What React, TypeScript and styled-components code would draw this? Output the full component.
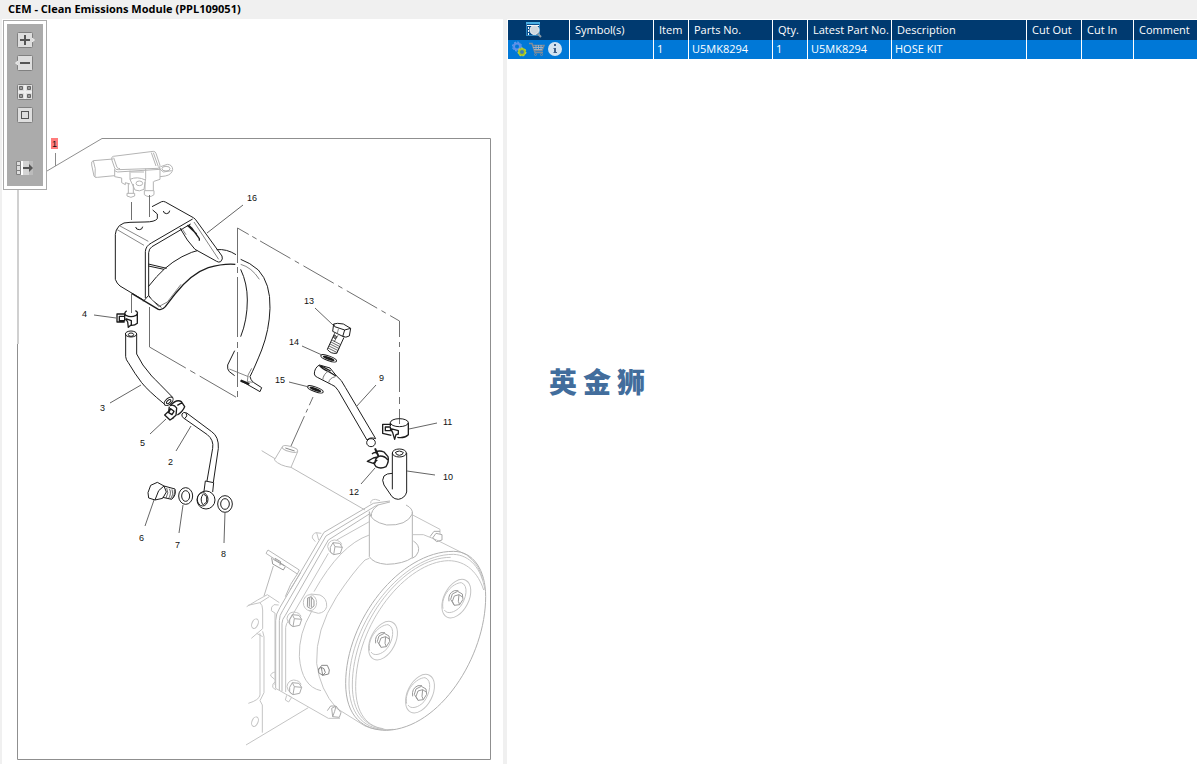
import React from "react";
import styled, { createGlobalStyle } from "styled-components";

const GlobalStyle = createGlobalStyle`
  * { box-sizing: border-box; }
  body {
    margin: 0;
    background: #fff;
    color: #000;
    font-family: "Open Sans", "Noto Sans", sans-serif;
    font-size: 11px;
  }
`;

const Page = styled.div`
  display: flex;
  flex-direction: column;
  min-height: 100vh;
`;

const TitleBar = styled.header`
  height: 19px;
  padding-left: 8px;
  background: #f0f0f0;
`;

const Title = styled.h1`
  margin: 0;
  font-size: 11px;
  line-height: 18px;
  font-weight: 700;
  white-space: nowrap;
`;

const Workspace = styled.main`
  flex: 1;
  display: grid;
  grid-template-columns: minmax(0, 503fr) 5px minmax(0, 689fr);
`;

const DiagramPane = styled.section`
  position: relative;
  border-left: 2px solid #f0f0f0;
`;

const Splitter = styled.div`
  background: #f0f0f0;
  border-right: 1px solid #fff;
`;

const PartsPane = styled.section`
  display: flex;
  flex-direction: column;
  padding-top: 1px;
  overflow: hidden;
`;

const Toolbar = styled.div`
  position: absolute;
  top: 1px;
  left: 1px;
  display: flex;
  flex-direction: column;
  align-items: center;
  gap: 7px;
  width: 44px;
  height: 170px;
  padding: 8px 0 12px;
  border: 1px solid #aaa;
  background: #ababab;
  box-shadow: inset 0 0 0 3px #fff;
`;

const ToolButton = styled.button<{ $before?: number }>`
  width: 20px;
  height: 16px;
  margin: ${(p) => p.$before ?? 0}px 0 0;
  padding: 0;
  border: 0;
  background: none;
  svg { display: block; }
`;

const Drawing = styled.svg`
  display: block;
  width: 100%;
  height: auto;
  text {
    font-family: "Liberation Sans", sans-serif;
    font-size: 9px;
    fill: #111;
  }
`;

const PartsTable = styled.table`
  width: 100%;
  table-layout: fixed;
  border-collapse: separate;
  border-spacing: 0;
`;

const HeadCell = styled.th`
  height: 20px;
  padding: 0 0 0 5px;
  border-right: 1px solid #fff;
  background: #003a70;
  color: #fff;
  font-weight: 400;
  line-height: 16px;
  text-align: left;
  white-space: nowrap;
  &:last-child { border-right: 0; }
`;

const Cell = styled.td`
  height: 19px;
  padding: 0 0 2px 3px;
  border-right: 1px solid #fff;
  background: #0078d7;
  color: #fff;
  line-height: 16px;
  white-space: nowrap;
  &:last-child { border-right: 0; }
`;

const IconRow = styled.div<{ $indent: number }>`
  display: flex;
  align-items: center;
  gap: 2px;
  padding-left: ${(p) => p.$indent}px;
`;

const IconButton = styled.button`
  padding: 0;
  border: 0;
  background: none;
  svg { display: block; }
`;

const Brand = styled.div`
  display: flex;
  gap: 6px;
  margin: 304px 0 0 41px;
  color: #426d9c;
  font-family: "Noto Sans CJK SC", sans-serif;
  font-size: 28px;
  line-height: 36px;
  font-weight: 900;
`;

const columns = [
  { name: "Symbol(s)", width: 84, value: "" },
  { name: "Item", width: 35, value: "1" },
  { name: "Parts No.", width: 84, value: "U5MK8294" },
  { name: "Qty.", width: 35, value: "1" },
  { name: "Latest Part No.", width: 84, value: "U5MK8294" },
  { name: "Description", width: 135, value: "HOSE KIT" },
  { name: "Cut Out", width: 55, value: "" },
  { name: "Cut In", width: 52, value: "" },
  { name: "Comment", width: undefined, value: "" },
];

const callouts: [string, number, number, string][] = [
  ["16", 247, 201, "M243 205L207 233"],
  ["4", 82, 317, "M94 315L116 318"],
  ["3", 100, 411, "M110 403L141 385"],
  ["5", 140, 446, "M150 434L166 419"],
  ["2", 168, 465, "M176 451L191 426"],
  ["6", 139, 541, "M145 526L154 500"],
  ["7", 175, 548, "M179 533L183 505"],
  ["8", 221, 557, "M224 543L225 512"],
  ["13", 304, 304, "M315 308L333 325"],
  ["14", 289, 345, "M302 346L322 355"],
  ["15", 275, 383, "M289 382L309 387"],
  ["9", 379, 381, "M376 385L356 407"],
  ["11", 443, 425, "M437 423L409 429"],
  ["12", 349, 495, "M361 484L375 468"],
  ["10", 443, 480, "M435 475L407 471"],
];

const Plate = () => (
  <rect x="2.5" y="0.5" width="15" height="15" rx="1" fill="#dedede" stroke="#808080" />
);

const Bolt = ({ x, y }: { x: number; y: number }) => (
  <g transform={`translate(${x} ${y})`}>
    <path d="M-22 -2Q-20 -20 -2 -22Q18 -20 20 -8M-22 -2Q-20 12 -8 20" />
    <path d="M-14 0L-6 -14L14 -12L22 0L16 18L-4 22L-14 14ZM-6 -14L0 -2L-4 22M0 -2L22 0" stroke="#aaa" />
  </g>
);

const Pad = ({ x, y }: { x: number; y: number }) => (
  <g transform={`translate(${x} ${y})`}>
    <ellipse rx="37" ry="62" transform="rotate(27)" />
    <path d="M-40 30C-48 -10 -10 -48 15 -48C38 -40 30 0 12 24C-4 42 -28 48 -36 34" />
    <path stroke="#999" d="M-17 2L-12 -14L4 -22L18 -14L20 2L10 18L-6 20ZM-6 -8L8 -12L20 -4M-6 -8L-12 8L-6 20M8 -12L6 8L10 18M-22 8Q-26 -16 -6 -24L6 -24" />
  </g>
);

const Washer = ({ x, y }: { x: number; y: number }) => (
  <g transform={`translate(${x} ${y}) rotate(20)`}>
    <ellipse rx="25" ry="7" strokeWidth="3" />
    <ellipse rx="16" ry="2" strokeWidth="5" />
  </g>
);

const AssemblyDrawing = () => (
  <Drawing viewBox="2 19 501 745" role="img" aria-label="Clean Emissions Module exploded view">
    <g fill="none" strokeLinecap="butt" strokeLinejoin="round">
      <path d="M47 171L102 138.500H490.500V759.500H17.500V343" stroke="#8f8f8f" />
      <path d="M18 190V344" stroke="#d0d0d0" strokeWidth="2" />
      <path d="M55.500 153V166" stroke="#8a8a8a" />

      {/* pressure sensor */}
      <g transform="translate(80 140) scale(.33333)" stroke="#b4b4b4" strokeWidth="3">
        <path d="M100 57L40 62Q33 63 35 75L42 108Q44 114 52 112L104 107M40 62Q49 85 45 111" />
        <path d="M100 49L220 34Q226 34 228 40L240 76Q242 83 234 85L115 89Q107 90 104 84L95 58Q94 50 100 49Z" />
        <path d="M101 53L111 82Q114 86 120 86M214 38L228 78M220 38L235 80" />
        <path d="M104 86V110L125 114V128L136 134V128L150 132M240 83V118L222 124M104 92L112 96L240 88" />
        <path d="M145 130V160M160 132V160M141 160H164V168Q153 176 141 168ZM195 126V152M220 124V152M193 152H222V164Q208 176 193 164Z" />
        <path d="M150 92V118L165 150Q178 156 192 148L197 116V86M150 118Q172 108 196 120M152 96H192" />
        <ellipse cx="178" cy="130" rx="10" ry="7" />
        <path d="M242 80L262 73Q277 74 278 88Q276 104 256 108L240 110M236 84L250 96L275 92" />
        <ellipse cx="258" cy="86" rx="12" ry="7" />
      </g>

      {/* bracket and band */}
      <g transform="translate(80 140) scale(.33333)" stroke="#1c1c1c" strokeWidth="3">
        <path d="M216 200L245 185Q250 183 256 186L340 233Q346 236 352 246L426 348Q430 357 422 365Q416 368 410 364L345 328L322 300L300 264" />
        <path d="M218 210L232 222V236Q225 246 195 246L150 247Q130 246 118 257Q106 270 106 283V418Q110 430 120 438L190 480" />
        <path d="M167 261Q168 269 178 269Q187 269 188 260M250 213Q251 221 260 221Q269 220 269 212" />
        <path d="M196 474V335Q197 318 214 309L338 237" />
        <path d="M206 466V338Q207 326 216 320L332 252" />
        <path d="M326 256L335 264L358 296V302M322 256L350 282" strokeWidth="4" />
        <path d="M205 440L230 410Q275 360 335 337L352 332M205 372L260 385M205 378L252 388" />
        <path d="M410 329Q440 326 468 344" />
        <path d="M155 460L235 508Q246 512 256 500L285 462Q335 400 385 383Q430 370 466 373" strokeWidth="4" />
        <path d="M190 484L206 466L216 480L244 502" />
        <path d="M110 268L192 316M120 258L205 304M342 246L416 358M305 264L318 284M206 470L236 500L262 486L303 433" stroke="#888" />
      </g>
      <g transform="translate(200 220) scale(.33333)" stroke="#1c1c1c" strokeWidth="3">
        <path d="M122 118Q150 128 175 150Q212 190 210 265Q208 330 185 390Q165 440 150 470Q152 480 160 487L185 503L180 515L122 482" />
        <path d="M122 148Q142 190 142 240Q142 300 122 350M104 392L83 435Q81 448 88 455L104 467" />
        <path d="M122 482L148 492" strokeWidth="7" />
        <path d="M122 133Q155 142 178 178M88 447L145 470M155 445Q140 465 142 485L160 487" stroke="#888" />
      </g>

      {/* assembly axes */}
      <g stroke="#707070">
        <path d="M131.500 202V220M131.500 292V313M149.500 195V217" />
        <path d="M237.500 228V398" strokeDasharray="35 4 6 4 60 5 6 4" />
        <path d="M237.500 228L399.500 321" strokeDasharray="13 4 5 4 35 5 5 5 35 5 5 5 35 5 5 5" />
        <path d="M399.500 321V424" strokeDasharray="16 5 5 5 40 5 7 5 60 5" />
        <path d="M149.500 307V347M149.500 347L237.500 398" strokeDasharray="42 5 6 5" />
        <path d="M313 397L291 446" strokeDasharray="9 4 4 4 60 4" />
      </g>

      {/* clamp 4, hose 3, clamp 5, tube 2, bolt 6, washers 7 and 8 */}
      <g transform="translate(60 290) scale(.33333)" stroke="#1c1c1c" strokeWidth="3">
        <path d="M200 62Q190 70 198 76Q213 84 228 76Q238 68 226 62M194 70V94M232 70V100Q224 107 212 106M194 72H171V96H194M178 79H194V92H178ZM197 86L203 96L205 112L214 104V92L197 86" strokeWidth="4" />
        <ellipse cx="213" cy="132" rx="17" ry="9" />
        <ellipse cx="213" cy="134" rx="8" ry="5" />
        <path d="M197 132V200Q198 210 205 218Q225 252 245 278Q262 300 314 343M230 132V192Q245 225 275 258Q292 275 338 322" />
        <ellipse cx="326" cy="334" rx="16" ry="9" transform="rotate(-42 326 334)" />
        <ellipse cx="326" cy="335" rx="8" ry="4" transform="rotate(-42 326 335)" />
        <path d="M330 347Q350 326 364 335L374 350Q368 365 352 375M352 346L366 338M330 347Q342 342 350 354L348 376L338 384M328 350L326 364L314 375L330 390L342 382M332 356L342 364L336 374L326 368Z" strokeWidth="4" />
        <path d="M372 385Q363 380 366 372Q370 364 380 369L455 425Q477 440 475 475L460 577M372 385L442 434Q462 450 458 475L441 573M378 369Q385 378 374 386M436 573L461 578L458 606M436 573L432 604" />
        <ellipse cx="438" cy="630" rx="27" ry="27" />
        <ellipse cx="428" cy="628" rx="16" ry="20" />
        <path d="M430 612Q418 626 428 644M432 613L440 620V636L430 644" />
        <path d="M264 608L272 586L292 577L312 588L319 606L308 625L285 630L266 624ZM312 588L296 602L285 630M312 588L345 597Q350 615 335 628L308 622" />
        <path d="M320 594Q328 608 318 624M328 596Q336 610 325 627M336 598Q343 612 332 627M343 600Q346 612 338 624" strokeWidth="2" />
        <ellipse cx="377" cy="618" rx="21" ry="25" />
        <ellipse cx="377" cy="618" rx="12" ry="16" />
        <ellipse cx="495" cy="642" rx="22" ry="25" />
        <ellipse cx="495" cy="642" rx="13" ry="16" />
      </g>

      {/* bolt 13 and washer 14 */}
      <g transform="translate(200 220) scale(.33333)" stroke="#1c1c1c" strokeWidth="3">
        <path d="M401 312Q410 308 430 312L452 325L448 348Q438 355 426 348L398 334ZM401 312L404 320L434 330L452 325M434 330L428 350" />
        <path d="M416 324L412 340" stroke="#888" />
        <path d="M404 340L382 388Q392 402 410 400L432 352" />
        <circle cx="405" cy="351" r="4" />
        <path d="M396 360L422 374M393 366L420 380M390 372L418 386M387 378L415 392M384 384L412 398M414 346L402 366" strokeWidth="2" />
        <Washer x={386} y={415} />
      </g>

      {/* pipe 9, clamps 11 and 12, elbow 10 */}
      <g transform="translate(260 360) scale(.33333)" stroke="#1c1c1c" strokeWidth="3">
        <Washer x={166} y={88} />
        <path d="M178 15Q163 24 163 42Q165 50 172 52L215 74Q225 76 235 92L321 240M178 15L210 24L228 46Q246 60 256 82L347 236" />
        <path d="M178 16Q186 26 208 36L228 48M184 18L212 33" strokeWidth="4" />
        <path d="M188 60Q190 42 206 33M206 68Q208 54 226 50" stroke="#777" />
        <ellipse cx="333" cy="248" rx="13" ry="12" />
        <path d="M321 240Q330 230 347 236" />
        <ellipse cx="418" cy="188" rx="27" ry="12" />
        <path d="M391 188V198M445 188V224Q432 236 412 232M391 193H368V220L394 226M391 201H376V212H392ZM392 206L415 212V222L408 224L404 238L398 218Z" strokeWidth="4" />
        <path d="M347 276Q358 270 372 276L384 290Q388 304 378 320Q362 328 348 320L340 308M346 310Q342 296 360 288Q376 288 383 300M356 290L340 294L322 304L340 310L352 300M336 282Q344 274 352 280" strokeWidth="4" />
        <path d="M345 265L356 290" strokeWidth="6" />
        <ellipse cx="418" cy="279" rx="21" ry="12" />
        <path d="M406 276Q408 286 418 286Q430 285 430 276M408 276Q418 270 428 276" />
        <path d="M397 279V388M440 279V396Q435 415 415 418Q404 418 396 410L372 375Q364 360 372 348Q380 340 397 340" />
      </g>

      {/* threaded boss on the housing */}
      <g transform="translate(260 360) scale(.33333)" stroke="#bbb" strokeWidth="3">
        <path d="M5 272L45 296M67 260L43 300Q60 318 93 322L113 275M93 322L315 450" />
        <ellipse cx="90" cy="267" rx="24" ry="8" transform="rotate(16 90 267)" />
        <path d="M76 264L104 273" stroke="#888" />
      </g>

      {/* canister */}
      <g transform="translate(240 490) scale(.33333)" stroke="#c4c4c4" strokeWidth="3">
        <path d="M388 65Q390 94 440 105Q500 108 517 72Q520 56 498 45M388 65V200Q400 220 440 223Q490 222 517 203V65M394 80Q392 60 415 45M520 153Q540 165 535 185Q530 200 517 205" stroke="#b4b4b4" />
        <path d="M450 33L400 40L252 127L120 352Q107 372 107 392V595M450 36L410 46L258 138L128 362Q118 376 118 392V600M388 72L265 150L136 376Q126 388 126 400V604" stroke="#b8b8b8" />
        <path d="M388 95L290 150M265 190L150 388Q137 400 137 412V606M392 40Q392 28 406 28L420 32" />
        <path d="M107 595L265 685H300M145 616L155 622L146 636L136 630L140 616" />
        <path d="M518 75L600 118V132M518 134H550L590 150L680 195Q720 225 728 270" />
        <path d="M388 135Q300 165 222 305M214 366Q176 430 178 500Q185 590 243 602" />
        <path d="M388 205L375 210Q340 245 290 320Q226 420 230 520Q240 600 290 655L375 708Q410 724 460 718" />
        <path d="M640 184C480 184 317 390 317 580C317 680 370 721 440 721C600 715 737 500 737 320C737 240 700 184 640 184Z" stroke="#b0b0b0" />
        <path d="M640 193C490 193 327 394 327 582C327 670 370 714 430 718M632 202C492 202 337 398 337 585C337 665 372 708 430 716M625 212C500 215 347 400 347 590C347 670 380 712 440 719M640 193C690 195 724 235 735 300M625 212C680 212 715 250 731 300" />
        <Pad x={649} y={326} />
        <Pad x={429} y={452} />
        <Pad x={540} y={611} />
        <Bolt x={285} y={172} />
        <Bolt x={163} y={388} />
        <Bolt x={163} y={592} />
        <path d="M262 662L272 648H286M275 655L288 648L303 668L298 682L278 680ZM288 648L284 664L278 680M570 140L582 124H600M578 144L588 130L606 134L606 150L590 155Z" stroke="#aaa" />
        <path d="M235 540L245 526L262 526M236 536L244 532L252 536L256 548L248 556L236 548ZM244 532L246 544L248 556M262 526L268 540L266 552L248 556" stroke="#888" />
        <path d="M244 130L228 128Q216 132 217 144L226 155M116 345L102 344Q92 350 94 362L106 370M106 546Q92 548 92 558L104 568M106 575Q96 580 98 592L108 600M230 128L236 150" />
        <ellipse cx="210" cy="338" rx="20" ry="24" />
        <path d="M212 312L240 315Q262 325 260 350Q255 368 235 370L206 362" />
        <path d="M203 324L214 320L222 332V348L212 356L202 350ZM208 324V350M214 322V352" stroke="#999" />
        <path d="M78 190L84 180L178 240L172 252ZM100 228L72 318M172 252Q150 280 136 320M182 248L150 300" stroke="#b8b8b8" />
        <path d="M95 203L98 222L130 240L136 230M105 205L122 215L120 226M100 208L134 228" stroke="#999" />
        <path d="M20 350Q55 328 82 314L118 338M24 346L60 338Q68 345 68 360V416L34 445M60 338L88 320M60 430V615Q58 630 25 640M68 424L72 440V608L60 632L67 645V728M50 430L68 440" />
        <ellipse cx="45" cy="401" rx="9" ry="15" transform="rotate(22 45 401)" />
        <ellipse cx="45" cy="695" rx="9" ry="15" transform="rotate(22 45 695)" />
        <path d="M18 765L205 653M105 370V585" />
      </g>

      {callouts.map(([label, , , d]) => (
        <path key={label} d={d} stroke="#666" strokeWidth="1" />
      ))}
    </g>
    <rect x="51" y="138" width="7" height="11" fill="#ff7c7c" />
    <text x="52" y="147">1</text>
    {callouts.map(([label, x, y]) => (
      <text key={label} x={x} y={y}>{label}</text>
    ))}
  </Drawing>
);

export default function App() {
  return (
    <Page>
      <GlobalStyle />
      <TitleBar>
        <Title>CEM - Clean Emissions Module (PPL109051)</Title>
      </TitleBar>
      <Workspace>
        <DiagramPane>
          <AssemblyDrawing />
          <Toolbar role="toolbar" aria-label="Drawing tools">
            <ToolButton $before={3} aria-label="Zoom in">
              <svg width="20" height="16">
                <Plate />
                <path d="M17 6L19.500 8L17 10" fill="#dedede" stroke="#eee" />
                <path d="M5 8H15M10 3V13" stroke="#555" strokeWidth="2" />
              </svg>
            </ToolButton>
            <ToolButton aria-label="Zoom out">
              <svg width="20" height="16">
                <Plate />
                <path d="M3 6L0.500 8L3 10" fill="#dedede" stroke="#eee" />
                <path d="M5 8H15" stroke="#555" strokeWidth="2" />
              </svg>
            </ToolButton>
            <ToolButton $before={6} aria-label="Fit all">
              <svg width="20" height="16">
                <Plate />
                <path d="M4.500 2.500h3v3h-3zM12.500 2.500h3v3h-3zM4.500 10.500h3v3h-3zM12.500 10.500h3v3h-3z" fill="#999" stroke="#666" />
                <path d="M10 1V15M3 8H17" stroke="#eee" strokeWidth="2" />
              </svg>
            </ToolButton>
            <ToolButton aria-label="Actual size">
              <svg width="20" height="16">
                <Plate />
                <rect x="6.500" y="4.500" width="7" height="7" fill="none" stroke="#555" />
              </svg>
            </ToolButton>
            <ToolButton $before={30} aria-label="Show panel">
              <svg width="20" height="16">
                <path d="M6 1H14V15H6z" fill="#d4d4d4" />
                <path d="M14 1H18V15H14z" fill="#bcbcbc" />
                <path d="M1.500 1.500h4v4h-4zM1.500 5.500h4v5h-4zM1.500 10.500h4v4h-4z" fill="#ddd" stroke="#808080" />
                <path d="M7 1V15" stroke="#fff" strokeWidth="2" />
                <path d="M8 8H15" stroke="#555" strokeWidth="2" />
                <path d="M14 4L18 8L14 12Z" fill="#555" />
              </svg>
            </ToolButton>
          </Toolbar>
        </DiagramPane>
        <Splitter role="separator" />
        <PartsPane>
          <PartsTable>
            <colgroup>
              <col style={{ width: 62 }} />
              {columns.map((c) => (
                <col key={c.name} style={{ width: c.width }} />
              ))}
            </colgroup>
            <thead>
              <tr>
                <HeadCell>
                  <IconRow $indent={13}>
                    <IconButton aria-label="Preview parts">
                      <svg width="16" height="16">
                        <rect x="0.500" y="0.500" width="13" height="13" fill="#0b4f8c" stroke="#2f86c0" />
                        <path d="M0 1H14" stroke="#4bb0e4" strokeWidth="2" />
                        <path d="M1 3.500H13" stroke="#fff" />
                        <path d="M2.500 5V13" stroke="#fff" strokeDasharray="2 1" />
                        <circle cx="8.500" cy="8" r="4.500" fill="#cfd8df" stroke="#f4f4f4" />
                        <path d="M11.500 11.500L15 15" stroke="#8c9aa6" strokeWidth="2" />
                      </svg>
                    </IconButton>
                  </IconRow>
                </HeadCell>
                {columns.map((c) => (
                  <HeadCell key={c.name}>{c.name}</HeadCell>
                ))}
              </tr>
            </thead>
            <tbody>
              <tr>
                <Cell>
                  <IconRow $indent={1}>
                    <IconButton aria-label="Related parts">
                      <svg width="15" height="16">
                        <circle cx="5" cy="5.500" r="3" fill="none" stroke="#5f8fe8" strokeWidth="2" />
                        <circle cx="5" cy="5.500" r="4.500" fill="none" stroke="#7aa5ee" strokeDasharray="2 1.500" />
                        <circle cx="10" cy="11" r="3" fill="#3d7fb4" stroke="#a9c520" strokeWidth="2" />
                        <circle cx="10" cy="11" r="4" fill="none" stroke="#c8dc4c" strokeDasharray="2 1.500" />
                      </svg>
                    </IconButton>
                    <IconButton aria-label="Add to cart">
                      <svg width="16" height="16" fill="none" stroke="#7d8c9b">
                        <path d="M0 2.500H3L6 11.500H14M3.500 4.500H15L13 9.500H5.500" strokeWidth="1.500" />
                        <path d="M4 6.500H14M5 8.500H13M7 4V9M9.500 4V9M12 4V9" stroke="#a3afba" />
                        <circle cx="6.500" cy="13.500" r="1" />
                        <circle cx="12.500" cy="13.500" r="1" />
                      </svg>
                    </IconButton>
                    <IconButton aria-label="Information">
                      <svg width="16" height="16">
                        <circle cx="8" cy="8" r="7" fill="#d3e3f1" />
                        <path d="M8 3V5M8 7V12" stroke="#3f5f88" strokeWidth="2" />
                        <path d="M6.500 7.500H8M6.500 11.500H10" stroke="#3f5f88" />
                      </svg>
                    </IconButton>
                  </IconRow>
                </Cell>
                {columns.map((c) => (
                  <Cell key={c.name}>{c.value}</Cell>
                ))}
              </tr>
            </tbody>
          </PartsTable>
          <Brand>
            <span>英</span>
            <span>金</span>
            <span>狮</span>
          </Brand>
        </PartsPane>
      </Workspace>
    </Page>
  );
}
